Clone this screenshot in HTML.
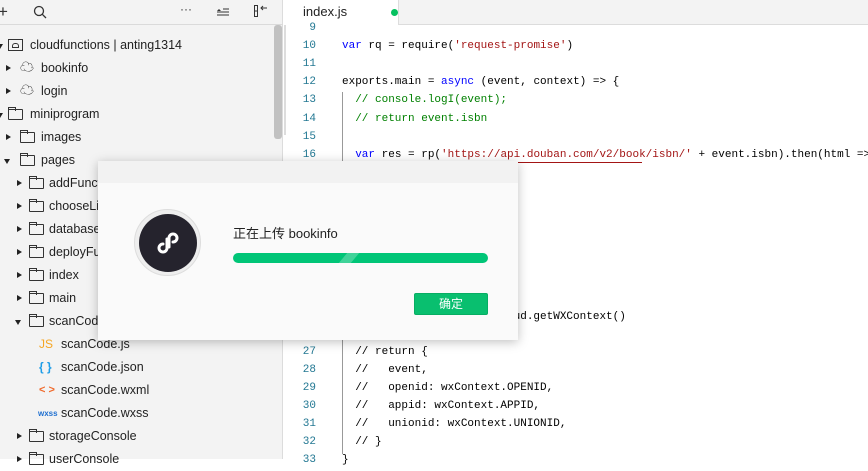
<!DOCTYPE html>
<html><head><meta charset="utf-8"><style>
*{margin:0;padding:0;box-sizing:border-box}
body{width:868px;height:459px;overflow:hidden;background:#fff;font-family:"Liberation Sans","Noto Sans CJK SC",sans-serif;position:relative}
#side{position:absolute;left:0;top:0;width:283px;height:459px;background:#f3f3f3;border-right:1px solid #dcdcdc}
#tb{position:absolute;left:0;top:0;width:283px;height:25px;border-bottom:1px solid #dadada;font-size:13px;color:#333}
.r{position:absolute;font-size:12.5px;color:#222;height:23px;line-height:23px;white-space:nowrap}
.ar{position:absolute;width:0;height:0;top:8px}
.ar.c{border-left:5px solid #222;border-top:3.5px solid transparent;border-bottom:3.5px solid transparent}
.ar.o{border-top:5px solid #222;border-left:3.5px solid transparent;border-right:3.5px solid transparent;top:10px}
.fd{position:absolute;top:6px;width:15px;height:11px;border:1px solid #333;border-radius:1px}
.fd:before{content:"";position:absolute;left:-1px;top:-3px;width:6px;height:3px;border:1px solid #333;border-bottom:none}
#ed{position:absolute;left:284px;top:0;right:0;bottom:0}
#tabs{position:absolute;left:0;top:0;right:0;height:25px;background:#f3f3f3;border-bottom:1px solid #dcdcdc}
#tab{position:absolute;left:0;top:0;width:115px;height:25px;background:#fff;border-right:1px solid #ddd;font-size:13px;line-height:24px;padding-left:19px;color:#222}
#tab i{position:absolute;left:107px;top:9px;width:7px;height:7px;border-radius:50%;background:#07c160}
.ln{position:absolute;left:0;width:32px;text-align:right;font:11px "Liberation Mono",monospace;color:#237893;height:18px;line-height:18px}
.cd{position:absolute;left:58px;font:11px "Liberation Mono",monospace;color:#000;white-space:pre;height:18px;line-height:18px}
.k{color:#0000ff}.s{color:#a31515}.cm{color:#008000}
#dlg{position:absolute;left:98px;top:161px;width:420px;height:179px;background:#fafafa;box-shadow:0 2px 10px rgba(0,0,0,.25)}
</style></head><body>
<div id="side">
<div id="tb">
<span style="position:absolute;left:-2px;top:2px;font-size:17px">+</span>
<svg style="position:absolute;left:33px;top:5px" width="14" height="14"><circle cx="6" cy="6" r="4.5" fill="none" stroke="#333" stroke-width="1.3"/><path d="M9.3 9.3L13 13" stroke="#333" stroke-width="1.3"/></svg>
<span style="position:absolute;left:180px;top:2px;font-size:12px">···</span>
<svg style="position:absolute;left:216px;top:6px" width="14" height="10"><path d="M1 5l2-2 2 2z" fill="#333"/><path d="M7 3h6M1 6h12M1 9h12" stroke="#333"/></svg>
<svg style="position:absolute;left:253px;top:4px" width="16" height="14"><rect x="1.5" y="1.5" width="3" height="11" fill="none" stroke="#333"/><path d="M1.5 7h3M14 4H8M10 2L8 4l2 2" fill="none" stroke="#333"/></svg>
</div>
<div style="position:absolute;left:274px;top:25px;width:8px;height:114px;background:#c1c1c1;border-radius:3px"></div>

<div class="r" style="top:34px;left:0;width:270px"><i class="ar o" style="left:-3px"></i><span style="position:absolute;left:8px;top:5px;width:15px;height:12px;border:1px solid #333"></span><span style="position:absolute;left:12px;top:9px;width:7px;height:5px;border:1px solid #333;border-radius:3px 3px 0 0"></span><span style="position:absolute;left:30px">cloudfunctions | anting1314</span></div>
<div class="r" style="top:57px;left:0"><i class="ar c" style="left:6px"></i><span style="position:absolute;left:20px;top:-1px;font-size:14px">☁</span><span style="position:absolute;left:41px">bookinfo</span></div>
<div class="r" style="top:80px;left:0"><i class="ar c" style="left:6px"></i><span style="position:absolute;left:20px;top:-1px;font-size:14px">☁</span><span style="position:absolute;left:41px">login</span></div>
<div class="r" style="top:103px;left:0;width:200px"><i class="ar o" style="left:-3px"></i><i class="fd" style="left:8px"></i><span style="position:absolute;left:30px">miniprogram</span></div>
<div class="r" style="top:126px;left:0;width:200px"><i class="ar c" style="left:6px"></i><i class="fd" style="left:20px"></i><span style="position:absolute;left:41px">images</span></div>
<div class="r" style="top:149px;left:0;width:200px"><i class="ar o" style="left:4px"></i><i class="fd" style="left:20px"></i><span style="position:absolute;left:41px">pages</span></div>
<div class="r" style="top:172px;width:200px"><i class="ar c" style="left:17px"></i><i class="fd" style="left:29px"></i><span style="position:absolute;left:49px">addFunction</span></div>
<div class="r" style="top:195px;width:200px"><i class="ar c" style="left:17px"></i><i class="fd" style="left:29px"></i><span style="position:absolute;left:49px">chooseLib</span></div>
<div class="r" style="top:218px;width:200px"><i class="ar c" style="left:17px"></i><i class="fd" style="left:29px"></i><span style="position:absolute;left:49px">databaseGuide</span></div>
<div class="r" style="top:241px;width:200px"><i class="ar c" style="left:17px"></i><i class="fd" style="left:29px"></i><span style="position:absolute;left:49px">deployFunctions</span></div>
<div class="r" style="top:264px;width:200px"><i class="ar c" style="left:17px"></i><i class="fd" style="left:29px"></i><span style="position:absolute;left:49px">index</span></div>
<div class="r" style="top:287px;width:200px"><i class="ar c" style="left:17px"></i><i class="fd" style="left:29px"></i><span style="position:absolute;left:49px">main</span></div>
<div class="r" style="top:310px;width:200px"><i class="ar o" style="left:15px"></i><i class="fd" style="left:29px"></i><span style="position:absolute;left:49px">scanCode</span></div>
<div class="r" style="top:333px;width:200px"><span style="position:absolute;left:39px;font-size:12px;color:#f5a623">JS</span><span style="position:absolute;left:61px">scanCode.js</span></div>
<div class="r" style="top:356px;width:200px"><span style="position:absolute;left:39px;font-size:12px;color:#1e9de7;font-weight:bold">{ }</span><span style="position:absolute;left:61px">scanCode.json</span></div>
<div class="r" style="top:379px;width:200px"><span style="position:absolute;left:39px;font-size:11px;color:#f06a2c;font-weight:bold">&lt; &gt;</span><span style="position:absolute;left:61px">scanCode.wxml</span></div>
<div class="r" style="top:402px;width:200px"><span style="position:absolute;left:38px;font-size:8px;color:#1e6fd0;font-weight:bold">wxss</span><span style="position:absolute;left:61px">scanCode.wxss</span></div>
<div class="r" style="top:425px;width:200px"><i class="ar c" style="left:17px"></i><i class="fd" style="left:29px"></i><span style="position:absolute;left:49px">storageConsole</span></div>
<div class="r" style="top:448px;width:200px"><i class="ar c" style="left:17px"></i><i class="fd" style="left:29px"></i><span style="position:absolute;left:49px">userConsole</span></div>
</div>

<div id="ed">
<div id="tabs"><div id="tab">index.js<i></i></div></div>
<div style="position:absolute;left:0;top:25px;width:2px;height:110px;background:#ddd"></div>
<div style="position:absolute;left:58px;top:92px;width:1px;height:362px;background:#999"></div>
<div class="ln" style="top:19px">9</div>
<div class="ln" style="top:37px">10</div><div class="cd" style="top:37px"><span class="k">var</span> rq = require(<span class="s">'request-promise'</span>)</div>
<div class="ln" style="top:55px">11</div>
<div class="ln" style="top:73px">12</div><div class="cd" style="top:73px">exports.main = <span class="k">async</span> (event, context) =&gt; {</div>
<div class="ln" style="top:91px">13</div><div class="cd" style="top:91px">  <span class="cm">// console.logI(event);</span></div>
<div class="ln" style="top:110px">14</div><div class="cd" style="top:110px">  <span class="cm">// return event.isbn</span></div>
<div class="ln" style="top:128px">15</div>
<div class="ln" style="top:146px">16</div><div class="cd" style="top:146px">  <span class="k">var</span> res = rp(<span class="s">'https://api.douban.com/v2/book/isbn/'</span> + event.isbn).then(html =&gt; {</div>
<div style="position:absolute;left:158px;top:162px;width:200px;height:1px;background:#a31515"></div>
<div class="cd" style="top:308px">  const wxContext =    cloud.getWXContext()</div>
<div class="ln" style="top:343px">27</div><div class="cd" style="top:343px">  // return {</div>
<div class="ln" style="top:361px">28</div><div class="cd" style="top:361px">  //   event,</div>
<div class="ln" style="top:379px">29</div><div class="cd" style="top:379px">  //   openid: wxContext.OPENID,</div>
<div class="ln" style="top:397px">30</div><div class="cd" style="top:397px">  //   appid: wxContext.APPID,</div>
<div class="ln" style="top:415px">31</div><div class="cd" style="top:415px">  //   unionid: wxContext.UNIONID,</div>
<div class="ln" style="top:433px">32</div><div class="cd" style="top:433px">  // }</div>
<div class="ln" style="top:451px">33</div><div class="cd" style="top:451px">}</div>
</div>

<div id="dlg">
<div style="height:22px;background:#f2f2f2"></div>
<div style="position:absolute;left:36px;top:48px;width:67px;height:67px;border-radius:50%;background:#eee;border:1px solid #ddd"></div>
<div style="position:absolute;left:41px;top:53px;width:58px;height:58px;border-radius:50%;background:#25232d"></div>
<svg style="position:absolute;left:56px;top:68px" width="28" height="28" viewBox="0 0 28 28"><path d="M13 10v9a4 4 0 1 1-4-4M15 18V9a4 4 0 1 1 4 4" fill="none" stroke="#fff" stroke-width="3" stroke-linecap="round"/></svg>
<div style="position:absolute;left:135px;top:62px;font-size:13px;color:#222">正在上传 bookinfo</div>
<div style="position:absolute;left:135px;top:92px;width:255px;height:10px;border-radius:5px;background:#00c577;overflow:hidden"><div style="position:absolute;left:110px;top:0;width:12px;height:10px;background:rgba(255,255,255,.25);transform:skewX(-40deg)"></div></div>
<div style="position:absolute;left:316px;top:132px;width:74px;height:22px;background:#09bf6f;border:1px solid #07ad63;border-radius:2px;color:#fff;font-size:12px;text-align:center;line-height:20px">确定</div>
</div>
</body></html>
